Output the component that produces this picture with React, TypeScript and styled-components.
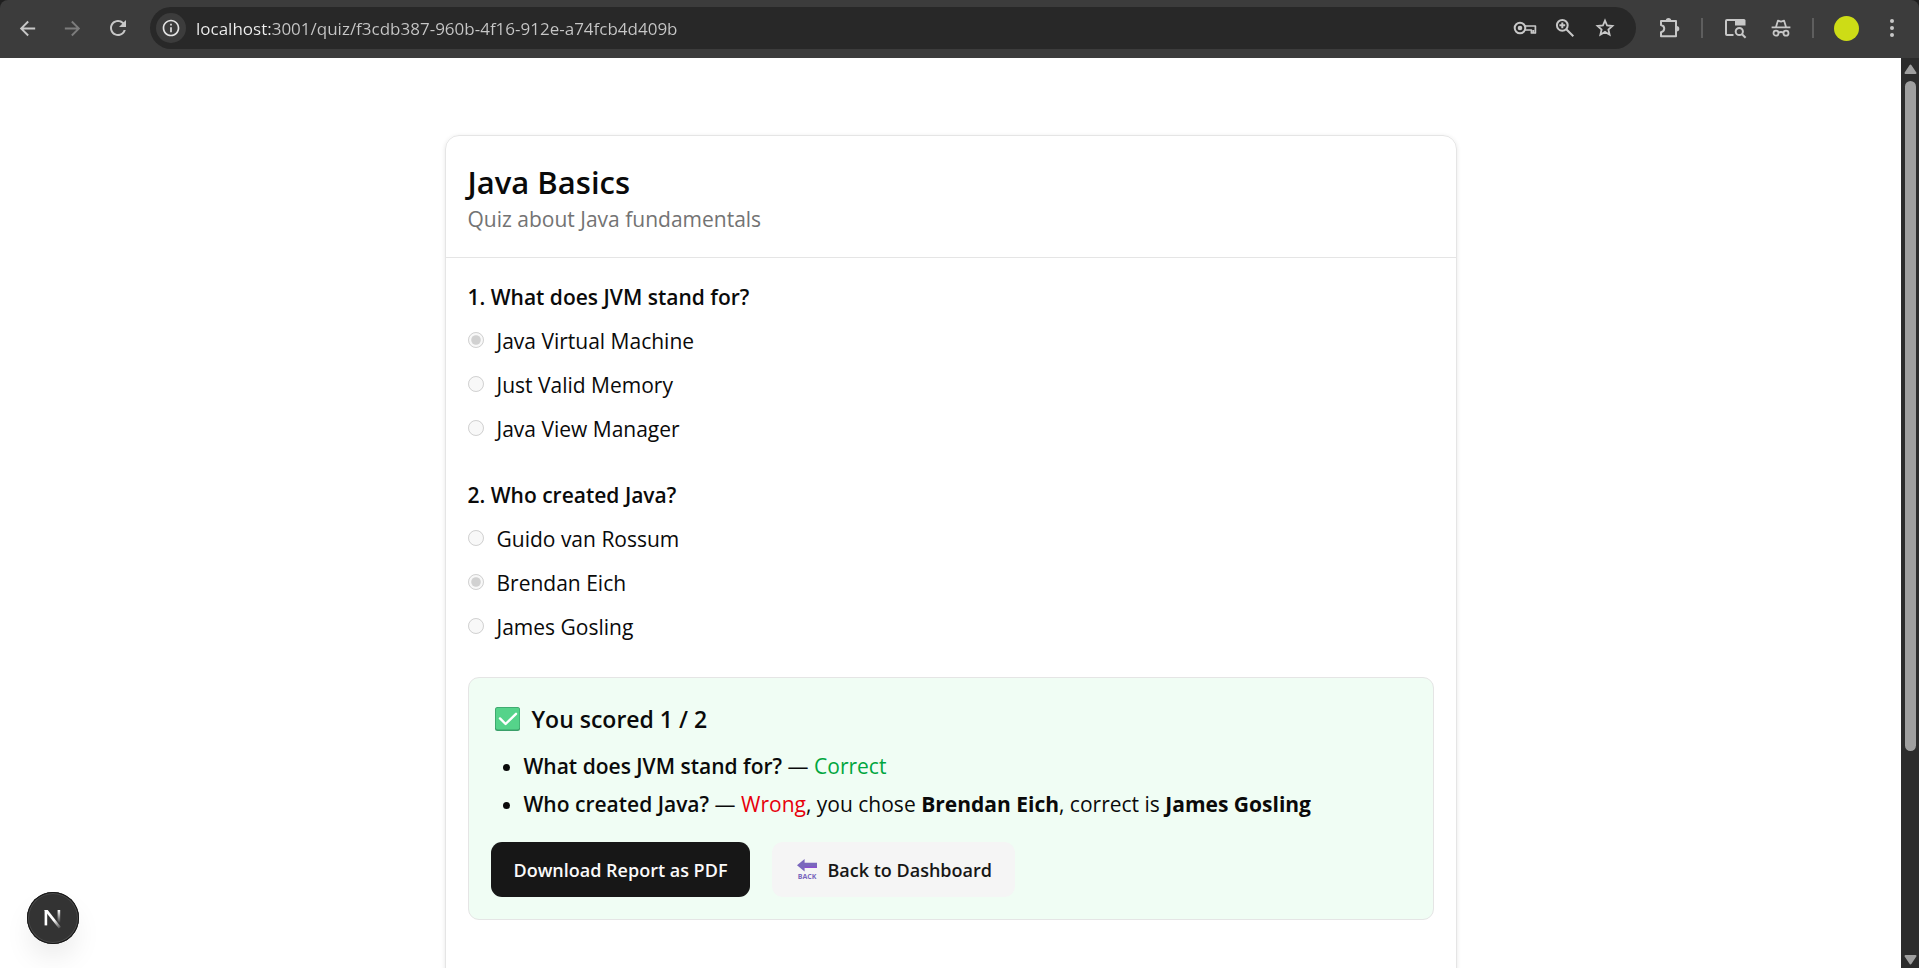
import React from "react";
import styled, { createGlobalStyle } from "styled-components";
import { MdArrowBack, MdArrowForward, MdInfoOutline, MdRefresh } from "react-icons/md";

const GlobalStyle = createGlobalStyle`
  * { box-sizing: border-box; }
  body {
    margin: 0;
    background: #1f1f1f;
    color: #0a0a0a;
    font-family: "Segoe UI", "Open Sans", "Noto Sans", sans-serif;
  }
  h1, h2, p, ul, fieldset, legend { margin: 0; padding: 0; border: 0; }
  button, input { font-family: inherit; }
`;

const Browser = styled.div`
  display: flex;
  flex-direction: column;
  height: 100vh;
`;

/* ---- browser toolbar ---- */

const Toolbar = styled.header`
  display: flex;
  align-items: center;
  flex: none;
  height: 58px;
  padding: 0 5px 2px 5px;
  background: #3c3c3c;
  border-radius: 8px 8px 0 0;
`;

const ToolButton = styled.button<{ $width?: number; $dim?: boolean }>`
  display: flex;
  align-items: center;
  justify-content: center;
  flex: none;
  width: ${(p) => p.$width ?? 45}px;
  height: 40px;
  padding: 0;
  border: 0;
  background: none;
  color: ${(p) => (p.$dim ? "#7c7c7c" : "#c7c7c7")};
`;

const AddressBar = styled.div`
  display: flex;
  align-items: center;
  flex: 1;
  min-width: 0;
  height: 42px;
  margin: 0 11px 0 10px;
  padding: 0 11px 0 6px;
  border-radius: 21px;
  background: #282828;
`;

const SiteInfoButton = styled.button`
  display: flex;
  align-items: center;
  justify-content: center;
  flex: none;
  width: 30px;
  height: 30px;
  padding: 0;
  border: 0;
  border-radius: 50%;
  background: #3c3c3c;
  color: #e3e3e3;
`;

const AddressInput = styled.input`
  flex: 1;
  min-width: 0;
  height: 30px;
  margin-left: 10px;
  padding: 0;
  border: 0;
  outline: 0;
  font-size: 17px;
  color: transparent;
  background: linear-gradient(to right, #f0f0f0 77px, #c7c7c7 77px);
  background-clip: text;
`;

const ToolDivider = styled.span`
  flex: none;
  width: 2px;
  height: 20px;
  margin: 0 10px 0 9px;
  background: #5e5e5e;
`;

const Avatar = styled.span`
  width: 25px;
  height: 25px;
  border-radius: 50%;
  background: #cddc16;
`;

/* ---- page ---- */

const Viewport = styled.div`
  display: flex;
  flex: 1;
  min-height: 0;
  background: #fff;
`;

const Page = styled.main`
  flex: 1;
  min-width: 0;
  overflow: hidden;
  padding: 77px 22px;
`;

const Card = styled.article`
  max-width: 1012px;
  margin: 0 auto;
  border: 1px solid #e5e5e5;
  border-radius: 14px;
  box-shadow: 0 1px 4px rgba(0, 0, 0, 0.1);
`;

const CardHeader = styled.header`
  padding: 25px 22px 22px;
  border-bottom: 1px solid #e5e5e5;
`;

const Title = styled.h1`
  font-size: 31px;
  font-weight: 600;
  line-height: 42px;
`;

const Description = styled.p`
  color: #737373;
  font-size: 21px;
  line-height: 32px;
`;

const CardBody = styled.div`
  display: flex;
  flex-direction: column;
  gap: 34px;
  padding: 23px 22px 88px;
`;

const Question = styled.fieldset`
  display: flex;
  flex-direction: column;
  gap: 12px;
  min-width: 0;
  font-size: 21px;
  line-height: 32px;
`;

const Prompt = styled.legend`
  margin-bottom: 12px;
  font-weight: 600;
`;

const Option = styled.label`
  display: flex;
  align-items: center;
  gap: 13px;
`;

const Radio = styled.input`
  width: 16px;
  height: 16px;
  margin: 0 0 2px;
`;

const Result = styled.section`
  padding: 22px;
  border: 1px solid #e5e5e5;
  border-radius: 11px;
  background: #f0fdf4;
`;

const Score = styled.h2`
  display: flex;
  align-items: center;
  gap: 12px;
  margin-bottom: 12px;
  padding-left: 4px;
  font-size: 23px;
  font-weight: 600;
  line-height: 38px;
`;

const Answers = styled.ul`
  display: flex;
  flex-direction: column;
  gap: 6px;
  margin-bottom: 22px;
  padding-left: 33px;
  font-size: 21px;
  line-height: 32px;
`;

const Topic = styled.span`
  font-weight: 600;
`;

const Verdict = styled.span<{ $correct?: boolean }>`
  color: ${(p) => (p.$correct ? "#00a63e" : "#e7000b")};
`;

const Actions = styled.div`
  display: flex;
  flex-wrap: wrap;
  gap: 22px;
`;

const ActionButton = styled.button<{ $primary?: boolean }>`
  display: flex;
  align-items: center;
  gap: 8px;
  height: 55px;
  padding: 0 23px;
  border: 0;
  border-radius: 11px;
  font-size: 18px;
  font-weight: 600;
  line-height: 28px;
  color: ${(p) => (p.$primary ? "#fafafa" : "#171717")};
  background: ${(p) => (p.$primary ? "#171717" : "#f5f5f5")};
`;

/* ---- scrollbar and dev badge ---- */

const Scrollbar = styled.div`
  display: flex;
  flex-direction: column;
  align-items: center;
  flex: none;
  width: 18px;
  padding: 6px 0 3px;
  background: #2c2c2c;
`;

const Track = styled.div`
  flex: 1;
  margin: 7px 0 4px;
`;

const Thumb = styled.div`
  width: 11px;
  height: 77%;
  border-radius: 6px;
  background: #9f9f9f;
`;

const DevBadge = styled.button`
  position: fixed;
  left: 27px;
  bottom: 24px;
  width: 52px;
  height: 52px;
  padding: 0;
  border: 0;
  border-radius: 50%;
  background: #333;
  box-shadow: inset 0 0 0 1px #171717, inset 0 0 0 2px #4a4a4a, 0 16px 32px -8px rgba(0, 0, 0, 0.14);
`;

const KeyIcon = () => (
  <svg width="24" height="14" viewBox="0 0 24 14" fill="none" stroke="currentColor" strokeWidth="2" aria-hidden="true">
    <circle cx="7" cy="7" r="5.3" />
    <circle cx="7" cy="7" r="2.3" fill="currentColor" stroke="none" />
    <path d="M12 5h10.4v7h-4V9H12M20.3 9v3" strokeWidth="1.7" strokeLinejoin="round" />
  </svg>
);

const ZoomIcon = () => (
  <svg width="20" height="20" viewBox="0 0 20 20" fill="none" stroke="currentColor" strokeWidth="2" aria-hidden="true">
    <circle cx="7.3" cy="7.3" r="5.4" />
    <path d="M11.3 11.3l7 7M7.3 4.4v5.8M4.4 7.3h5.8" />
  </svg>
);

const StarIcon = () => (
  <svg width="20" height="20" viewBox="0 0 20 20" fill="none" stroke="currentColor" strokeWidth="1.8" aria-hidden="true">
    <path d="M10 2.6l2.1 4.9 5.3.5-4 3.5 1.2 5.2-4.6-2.8-4.6 2.8 1.2-5.2-4-3.5 5.3-.5z" />
  </svg>
);

const PuzzleIcon = () => (
  <svg width="22" height="22" viewBox="0 0 22 22" fill="none" stroke="currentColor" strokeWidth="2" strokeLinejoin="round" aria-hidden="true">
    <path d="M2 4h15v15.3H2v-4.1c4.3-1 4.3-6.2 0-7.2z" />
    <path d="M6.8 3.6a2.7 2.7 0 0 1 5.4 0zM17.6 9a2.7 2.7 0 0 1 0 5.4z" fill="currentColor" stroke="none" />
  </svg>
);

const TabSearchIcon = () => (
  <svg width="24" height="22" viewBox="0 0 24 22" fill="none" stroke="currentColor" strokeWidth="2" aria-hidden="true">
    <path d="M9.5 18H3a1 1 0 0 1-1-1V4a1 1 0 0 1 1-1h9" />
    <path d="M11 2h9a1.5 1.5 0 0 1 1.5 1.5v5H11z" fill="currentColor" stroke="none" />
    <circle cx="15.3" cy="14.5" r="3.6" />
    <path d="M18 17.2l3.6 3.6" />
  </svg>
);

const IncognitoIcon = () => (
  <svg width="20" height="18" viewBox="0 0 20 18" fill="none" stroke="currentColor" strokeWidth="1.8" aria-hidden="true">
    <path d="M.6 8.4h18.8M5 8l1.9-6.3 3.1.9 3.1-.9L15 8" strokeLinejoin="round" />
    <circle cx="5" cy="14.2" r="2.5" />
    <circle cx="15" cy="14.2" r="2.5" />
    <path d="M7.3 13.6q2.7-1.2 5.4 0" />
  </svg>
);

const MenuDotsIcon = () => (
  <svg width="6" height="20" viewBox="0 0 6 20" fill="currentColor" aria-hidden="true">
    <circle cx="3" cy="3" r="2" />
    <circle cx="3" cy="10" r="2" />
    <circle cx="3" cy="17" r="2" />
  </svg>
);

const CheckEmoji = () => (
  <svg width="25" height="24" viewBox="0 0 25 24" role="img" aria-label="Passed">
    <rect width="25" height="24" rx="2.5" fill="#3a9f69" />
    <rect x=".8" y=".8" width="23.6" height="21.8" rx="2" fill="#55d38a" />
    <path d="M5 11.4l5.6 5.6L21 6.8" fill="none" stroke="#fff" strokeWidth="2.4" strokeLinecap="round" strokeLinejoin="round" />
  </svg>
);

const BackEmoji = () => (
  <svg width="24" height="24" viewBox="-2 -1 24 24" overflow="visible" aria-hidden="true">
    <path d="M0 6.2L7.6 0v3.8H20v5H7.6v3.6z" fill="#7a67bd" />
    <path d="M7.6 7.8H20v1H7.6z" fill="#8a3fd1" />
    <text x="10" y="19.6" textAnchor="middle" fontSize="7" fontWeight="700" fill="#7a67bd">BACK</text>
  </svg>
);

const NextLogo = () => (
  <svg width="52" height="52" viewBox="0 0 52 52" aria-hidden="true">
    <defs>
      <linearGradient id="stem" x1="0" y1="18" x2="0" y2="31" gradientUnits="userSpaceOnUse">
        <stop stopColor="#fff" />
        <stop offset="1" stopColor="#fff" stopOpacity="0" />
      </linearGradient>
      <linearGradient id="slash" x1="27" y1="28" x2="34" y2="37" gradientUnits="userSpaceOnUse">
        <stop stopColor="#fff" />
        <stop offset="1" stopColor="#fff" stopOpacity="0" />
      </linearGradient>
    </defs>
    <path d="M17.6 18h2.6v15.4h-2.6z" fill="#fff" />
    <path d="M17.6 18h3.1l13.3 17-2.2 1.6L17.6 18.6z" fill="url(#slash)" />
    <path d="M30.6 18h2.6v13.5h-2.6z" fill="url(#stem)" />
  </svg>
);

const ArrowTip = ({ down = false }: { down?: boolean }) => (
  <svg width="13" height="10" viewBox="0 0 13 10" aria-hidden="true">
    <path d={down ? "M1.5 1h10L6.5 8.5z" : "M1.5 9h10L6.5 1.5z"} fill="#9f9f9f" stroke="#9f9f9f" strokeWidth="2" strokeLinejoin="round" />
  </svg>
);

const questions = [
  { prompt: "What does JVM stand for?", options: ["Java Virtual Machine", "Just Valid Memory", "Java View Manager"], chosen: 0 },
  { prompt: "Who created Java?", options: ["Guido van Rossum", "Brendan Eich", "James Gosling"], chosen: 1 },
];

export default function App() {
  return (
    <Browser>
      <GlobalStyle />
      <Toolbar>
        <ToolButton aria-label="Back"><MdArrowBack size={23} /></ToolButton>
        <ToolButton aria-label="Forward" $dim><MdArrowForward size={23} /></ToolButton>
        <ToolButton aria-label="Reload"><MdRefresh size={24} /></ToolButton>
        <AddressBar>
          <SiteInfoButton aria-label="Site information"><MdInfoOutline size={20} /></SiteInfoButton>
          <AddressInput type="text" aria-label="Address" defaultValue="localhost:3001/quiz/f3cdb387-960b-4f16-912e-a74fcb4d409b" />
          <ToolButton $width={40} aria-label="Passwords"><KeyIcon /></ToolButton>
          <ToolButton $width={40} aria-label="Zoom"><ZoomIcon /></ToolButton>
          <ToolButton $width={40} aria-label="Bookmark"><StarIcon /></ToolButton>
        </AddressBar>
        <ToolButton aria-label="Extensions"><PuzzleIcon /></ToolButton>
        <ToolDivider />
        <ToolButton aria-label="Search tabs"><TabSearchIcon /></ToolButton>
        <ToolButton aria-label="Incognito"><IncognitoIcon /></ToolButton>
        <ToolDivider />
        <ToolButton aria-label="Profile"><Avatar /></ToolButton>
        <ToolButton aria-label="Menu"><MenuDotsIcon /></ToolButton>
      </Toolbar>

      <Viewport>
        <Page>
          <Card>
            <CardHeader>
              <Title>Java Basics</Title>
              <Description>Quiz about Java fundamentals</Description>
            </CardHeader>
            <CardBody>
              {questions.map((q, i) => (
                <Question key={q.prompt}>
                  <Prompt>{`${i + 1}. ${q.prompt}`}</Prompt>
                  {q.options.map((option, j) => (
                    <Option key={option}>
                      <Radio type="radio" name={`question-${i}`} defaultChecked={j === q.chosen} disabled />
                      {option}
                    </Option>
                  ))}
                </Question>
              ))}
              <Result>
                <Score><CheckEmoji />You scored 1 / 2</Score>
                <Answers>
                  <li><Topic>What does JVM stand for?</Topic> — <Verdict $correct>Correct</Verdict></li>
                  <li>
                    <Topic>Who created Java?</Topic> — <Verdict>Wrong</Verdict>, you chose <strong>Brendan Eich</strong>, correct is <strong>James Gosling</strong>
                  </li>
                </Answers>
                <Actions>
                  <ActionButton $primary>Download Report as PDF</ActionButton>
                  <ActionButton><BackEmoji />Back to Dashboard</ActionButton>
                </Actions>
              </Result>
            </CardBody>
          </Card>
        </Page>
        <Scrollbar aria-hidden="true">
          <ArrowTip />
          <Track><Thumb /></Track>
          <ArrowTip down />
        </Scrollbar>
      </Viewport>

      <DevBadge aria-label="Open Next.js dev tools"><NextLogo /></DevBadge>
    </Browser>
  );
}
